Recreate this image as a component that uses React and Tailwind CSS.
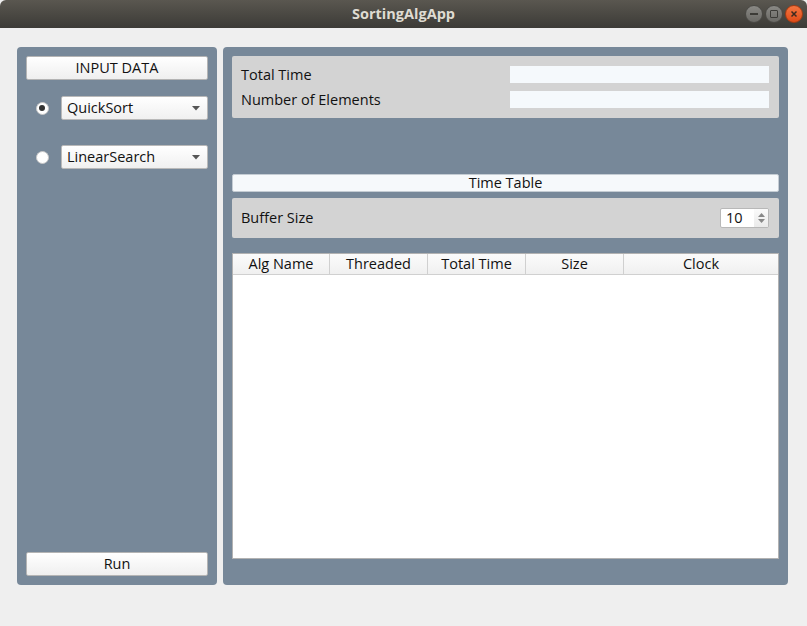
import React from "react";

function Combo({ label }) {
  return (
    <div className="flex h-[24px] w-[147px] items-center justify-between rounded-[2px] border border-[#b9b9b9] bg-gradient-to-b from-[#ffffff] to-[#f0f0f0] pl-[5px] pr-[7px] text-[14.5px] text-[#111]">
      <span>{label}</span>
      <svg width="8" height="5" viewBox="0 0 8 5">
        <path d="M0 0 L8 0 L4 4.5 Z" fill="#555" />
      </svg>
    </div>
  );
}

function Radio({ checked }) {
  return (
    <div className="flex h-[13px] w-[13px] items-center justify-center rounded-full border border-[#c9c9c9] bg-white">
      {checked && <div className="h-[6px] w-[6px] rounded-full bg-[#333]" />}
    </div>
  );
}

function Button({ children, className = "" }) {
  return (
    <div
      className={
        "flex items-center justify-center rounded-[2px] border border-[#b4b4b4] bg-gradient-to-b from-[#ffffff] to-[#efefef] text-[14.5px] text-[#111] " +
        className
      }
    >
      {children}
    </div>
  );
}

export default function App() {
  const cols = [
    { name: "Alg Name", w: "w-[97px]" },
    { name: "Threaded", w: "w-[98px]" },
    { name: "Total Time", w: "w-[98px]" },
    { name: "Size", w: "w-[98px]" },
    { name: "Clock", w: "flex-1" },
  ];
  return (
    <div
      className="flex h-[626px] w-[807px] flex-col overflow-hidden bg-[#efefef]"
      style={{ fontFamily: '"Open Sans", "DejaVu Sans", sans-serif' }}
    >
      {/* Title bar */}
      <div className="relative flex h-[28px] shrink-0 items-center justify-center rounded-t-[6px] bg-gradient-to-b from-[#5a5750] to-[#3c3b37]">
        <span className="text-[14.5px] font-bold text-[#dfdbd2]">SortingAlgApp</span>
        <div className="absolute right-[4px] top-[5px] flex gap-[2px]">
          <div className="flex h-[18px] w-[18px] items-center justify-center rounded-full border border-[#4a4945] bg-gradient-to-b from-[#8a8985] to-[#6a6965]">
            <div className="h-[1.5px] w-[8px] bg-[#3c3b37]" />
          </div>
          <div className="flex h-[18px] w-[18px] items-center justify-center rounded-full border border-[#4a4945] bg-gradient-to-b from-[#8a8985] to-[#6a6965]">
            <div className="h-[8px] w-[8px] rounded-[1px] border-[1.5px] border-[#3c3b37]" />
          </div>
          <div className="flex h-[18px] w-[18px] items-center justify-center rounded-full border border-[#a73b12] bg-gradient-to-b from-[#f3753f] to-[#df4a16]">
            <svg width="8" height="8" viewBox="0 0 8 8">
              <path d="M1.5 1.5 L6.5 6.5 M6.5 1.5 L1.5 6.5" stroke="#3c2a20" strokeWidth="1.5" />
            </svg>
          </div>
        </div>
      </div>

      {/* Body */}
      <div className="flex gap-[6px] pl-[17px] pt-[19px]">
        {/* Left panel */}
        <div className="flex h-[538px] w-[200px] flex-col rounded-[4px] bg-[#778899] p-[9px]">
          <Button className="h-[24px] w-[182px]">INPUT DATA</Button>
          <div className="mt-[16px] flex items-center">
            <div className="flex w-[35px] justify-center pr-[3px]">
              <Radio checked />
            </div>
            <Combo label="QuickSort" />
          </div>
          <div className="mt-[25px] flex items-center">
            <div className="flex w-[35px] justify-center pr-[3px]">
              <Radio />
            </div>
            <Combo label="LinearSearch" />
          </div>
          <div className="flex-1" />
          <Button className="h-[24px] w-[182px]">Run</Button>
        </div>

        {/* Right panel */}
        <div className="flex h-[538px] w-[565px] flex-col rounded-[4px] bg-[#778899] p-[9px]">
          <div className="flex h-[62px] flex-col gap-[8px] rounded-[2px] bg-[#d3d3d3] pl-[9px] pr-[10px] py-[10px] text-[14.5px] text-[#111]">
            <div className="flex h-[17px] items-center justify-between">
              <span>Total Time</span>
              <div className="h-[17px] w-[259px] bg-[#f5f9fc]" />
            </div>
            <div className="flex h-[17px] items-center justify-between">
              <span>Number of Elements</span>
              <div className="h-[17px] w-[259px] bg-[#f5f9fc]" />
            </div>
          </div>

          <div className="mt-[56px] flex h-[18px] items-center justify-center rounded-[2px] border border-[#c4ccd3] bg-[#f6f9fb] text-[14.5px] text-[#111]">
            Time Table
          </div>

          <div className="mt-[6px] flex h-[40px] items-center justify-between rounded-[2px] bg-[#d3d3d3] pl-[9px] pr-[10px] text-[14.5px] text-[#111]">
            <span>Buffer Size</span>
            <div className="flex h-[20px] w-[49px] overflow-hidden rounded-[2px] border border-[#b8b8b8] bg-white">
              <div className="flex flex-1 items-center pl-[5px] text-[14.5px]">10</div>
              <div className="flex w-[14px] flex-col items-center justify-center gap-[2px] bg-gradient-to-b from-[#fafafa] to-[#eaeaea]">
                <svg width="7" height="4" viewBox="0 0 7 4">
                  <path d="M0 4 L7 4 L3.5 0 Z" fill="#888" />
                </svg>
                <svg width="7" height="4" viewBox="0 0 7 4">
                  <path d="M0 0 L7 0 L3.5 4 Z" fill="#888" />
                </svg>
              </div>
            </div>
          </div>

          <div className="mt-[15px] flex h-[306px] flex-col border border-[#b2b2b2] bg-white">
            <div className="flex h-[21px] border-b border-[#d0d0d0] bg-gradient-to-b from-[#fbfbfb] to-[#f0f0f0] text-[14.5px] text-[#111]">
              {cols.map((c, i) => (
                <div
                  key={c.name}
                  className={
                    c.w +
                    " flex items-center justify-center" +
                    (i < cols.length - 1 ? " border-r border-[#d0d0d0]" : "")
                  }
                >
                  {c.name}
                </div>
              ))}
            </div>
          </div>
        </div>
      </div>
    </div>
  );
}
